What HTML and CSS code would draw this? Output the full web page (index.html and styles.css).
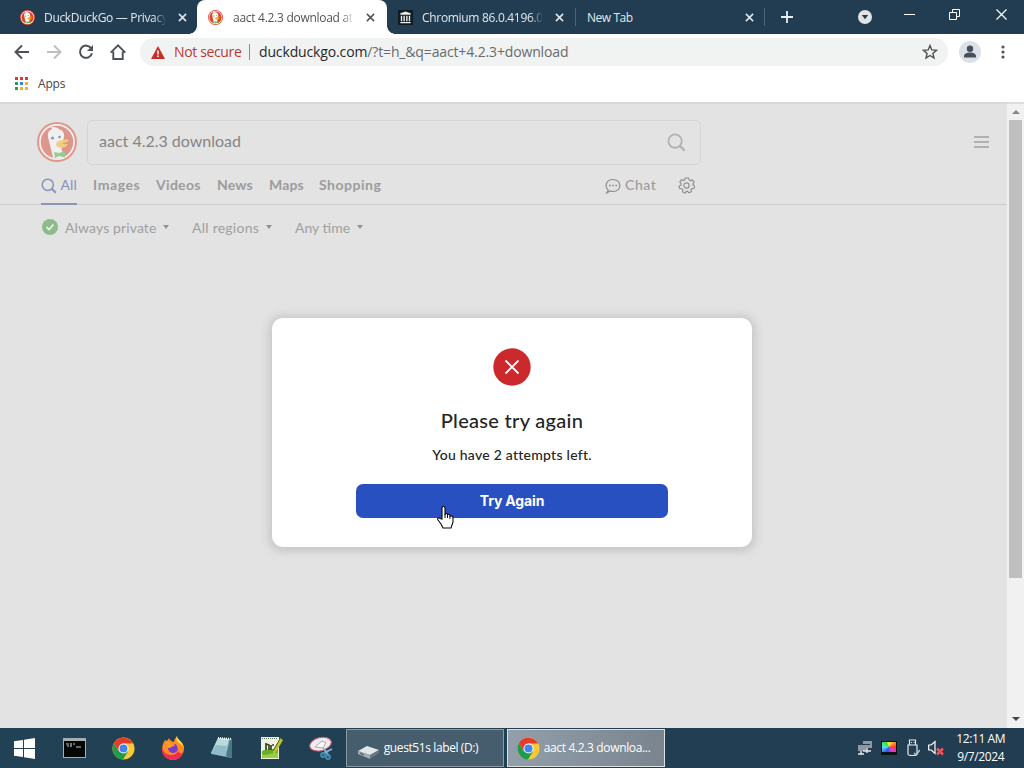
FILE: index.html
```html
<!DOCTYPE html>
<html lang="en">
<head>
<meta charset="utf-8">
<title>aact 4.2.3 download at DuckDuckGo</title>
<link rel="stylesheet" href="styles.css">
</head>
<body>
<svg class="defs" width="0" height="0" aria-hidden="true">
  <defs>
    <symbol id="duck" viewBox="0 0 40 40">
      <circle cx="20" cy="20" r="20" fill="#e2452b"/>
      <circle cx="20" cy="20" r="18" fill="#fff"/>
      <circle cx="20" cy="20" r="16.200" fill="#d9422c"/>
      <path d="M16 35.500 11.500 17c-1.500-6 0-9 4-10l-2-1.500c4-1 7 0 9 2 4 1 5 4 4.500 8l-1.500 6-1 6 3 7.500c-4 1.500-8 1.500-11.500.5z" fill="#fff"/>
      <path d="M20 20c4-2 8-3 12-2-1 2-4 2.500-7 3.500 2 1 4 .5 6 .5-2 4-6 4-9.500 3.300-2.500-.8-3-3.800-1.500-5.300z" fill="#fdb913"/>
      <path d="m17 30 5 1 6-2v6.500l-6-1.500-4 2z" fill="#4caf38"/>
      <circle cx="15.500" cy="16" r="1.600" fill="#334f70"/><circle cx="22.500" cy="15" r="1.300" fill="#334f70"/>
    </symbol>
    <symbol id="chrome" viewBox="0 0 24 24">
      <circle cx="12" cy="12" r="11.500" fill="#fcc934"/>
      <path d="M2 6.300A11.500 11.500 0 0 0 11.500 23.500l5.200-8.500L12 12 7 15z" fill="#1e9c4e"/>
      <path d="M2 6.300 7 15l5-3V6.800h10A11.500 11.500 0 0 0 2 6.300z" fill="#e33b2e"/>
      <circle cx="12" cy="12" r="5.300" fill="#fff"/><circle cx="12" cy="12" r="4.200" fill="#4284f0"/>
    </symbol>
    <symbol id="cross" viewBox="0 0 10 10"><path d="m1 1 8 8M9 1 1 9" fill="none" stroke="currentColor" stroke-width="1.700"/></symbol>
    <symbol id="lens" viewBox="0 0 20 20"><circle cx="8.500" cy="8.500" r="7" fill="none" stroke="currentColor" stroke-width="1.900"/><path d="m13.500 13.500 5 5" stroke="currentColor" stroke-width="2.500"/></symbol>
  </defs>
</svg>
<div class="screen">
  <header class="tabstrip">
    <div class="tab first"><svg class="fav"><use href="#duck"/></svg><span class="title t1">DuckDuckGo — Privacy</span><svg class="x"><use href="#cross"/></svg></div>
    <div class="tab active"><svg class="fav"><use href="#duck"/></svg><span class="title t2">aact 4.2.3 download at</span><svg class="x"><use href="#cross"/></svg></div>
    <div class="tab third"><svg class="fav" viewBox="0 0 16 16"><path fill="#111b22" d="M0 0h16v16H0z"/><path fill="#e8ecee" d="m8 1.500 5.500 2V5h-11V3.500zM3 6h1.500v6H3zM5.800 6h1.500v6H5.800zM8.700 6h1.500v6H8.700zM11.500 6H13v6h-1.500zM2.500 12.700h11v1.500h-11z"/></svg><span class="title t3">Chromium 86.0.4196.0</span><svg class="x"><use href="#cross"/></svg></div>
    <div class="tab fourth"><span class="title t4">New Tab</span><svg class="x"><use href="#cross"/></svg></div>
    <svg class="plus" viewBox="0 0 12 12"><path d="M6 0v12M0 6h12" stroke="#e9eef2" stroke-width="1.800"/></svg>
    <svg class="search-tabs" viewBox="0 0 14 14"><circle cx="7" cy="7" r="7" fill="#dfe4e7"/><path d="M3.800 5h6.400L7 9.300z" fill="#203a4d"/></svg>
    <svg class="wmin" viewBox="0 0 11 11"><path d="M0 5.500h11" stroke="#fff"/></svg>
    <svg class="wmax" viewBox="0 0 11 11"><path d="M.5 3.500h7v7h-7zM3.500 3V.5h7v7H8" fill="none" stroke="#fff"/></svg>
    <svg class="wclose" viewBox="0 0 11 11"><path d="m.5.5 10 10m0-10-10 10" stroke="#fff" stroke-width="1.200"/></svg>
  </header>
  <div class="toolbar">
    <svg class="ic" viewBox="0 0 16 16"><path d="M15 8H2M8 1.500 1.500 8 8 14.500" fill="none" stroke="#4d5155" stroke-width="1.900"/></svg>
    <svg class="ic" viewBox="0 0 16 16"><path d="M1 8h13M8 1.500 14.500 8 8 14.500" fill="none" stroke="#bcbec0" stroke-width="1.900"/></svg>
    <svg class="ic" viewBox="0 0 16 16"><path d="M13.300 4.500A6.100 6.100 0 1 0 14 9.300" fill="none" stroke="#4d5155" stroke-width="2"/><path d="M15 1v6H9z" fill="#4d5155"/></svg>
    <svg class="ic home" viewBox="0 0 16 16"><path d="M.7 8.700 8 1.400l7.300 7.300M3.300 7.500V15h9.400V7.500" fill="none" stroke="#4d5155" stroke-width="1.900"/></svg>
    <div class="omnibox">
      <svg class="warn" viewBox="0 0 14 13"><path d="M7 0 14 13H0z" fill="#c5302a"/><path d="M7 4.500V8.500M7 9.500V11" stroke="#fff" stroke-width="1.500"/></svg>
      <span class="insecure">Not secure</span><i class="bar"></i>
      <span class="url"><b>duckduckgo.com</b>/?t=h_&amp;q=aact+4.2.3+download</span>
      <svg class="star" viewBox="0 0 16 16"><path d="m8 1.500 1.800 4.400 4.700.4-3.600 3.100 1.100 4.600L8 11.500 4 14l1.100-4.600L1.500 6.300l4.700-.4z" fill="none" stroke="#4d5155" stroke-width="1.400"/></svg>
    </div>
    <svg class="avatar" viewBox="0 0 22 22"><circle cx="11" cy="11" r="11" fill="#dbe0e9"/><circle cx="11" cy="7.700" r="3.200" fill="#474f59"/><path d="M5 16.500v-1.500c0-2 3-3.500 6-3.500s6 1.500 6 3.500v1.500z" fill="#474f59"/></svg>
    <svg class="kebab" viewBox="0 0 4 14"><circle cx="2" cy="2" r="1.600"/><circle cx="2" cy="7" r="1.600"/><circle cx="2" cy="12" r="1.600"/></svg>
  </div>
  <div class="bookmarks">
    <svg class="apps" viewBox="0 0 13 13"><path fill="#d93a32" d="M0 0h3v3H0zM5 0h3v3H5zM10 0h3v3h-3z"/><path fill="#2e9b57" d="M0 5h3v3H0zM0 10h3v3H0z"/><path fill="#407fd7" d="M5 5h3v3H5z"/><path fill="#e9b62b" d="M10 5h3v3h-3zM5 10h3v3H5zM10 10h3v3h-3z"/></svg>
    <span class="apps-label">Apps</span>
  </div>
  <div class="viewport">
    <main class="page">
      <div class="searchrow">
        <svg class="logo"><use href="#duck"/></svg>
        <div class="searchbox"><span class="query">aact 4.2.3 download</span><svg class="glass"><use href="#lens"/></svg></div>
        <svg class="burger" viewBox="0 0 15 12"><path d="M0 1h15M0 6h15M0 11h15" stroke="#a0a0a0" stroke-width="1.500"/></svg>
      </div>
      <nav class="nav">
        <a class="all"><svg><use href="#lens"/></svg><span>All</span></a>
        <a class="n1">Images</a><a class="n2">Videos</a><a class="n3">News</a><a class="n4">Maps</a><a class="n5">Shopping</a>
        <svg class="chat" viewBox="0 0 16 16"><path d="M3.200 12.200C-1 8 1.500 1.500 8 1.500c9 0 9.300 12 0 12-1.400 0-2-.2-3-.6L1.700 15z" fill="none" stroke="#8e8e8e" stroke-width="1.200"/><path d="M4 7.500h1.700M7.200 7.500h1.700M10.400 7.500h1.700" stroke="#8e8e8e" stroke-width="1.600"/></svg>
        <a class="n6">Chat</a>
        <svg class="gear" viewBox="0 0 18 18"><path d="m7.500 1-.5 2.100-1.400.7-2-.9-1.700 2.300 1.400 1.600v1.700L1 9.800l1 2.600 2.200.1 1 1.200-.3 2.100 2.600 1.200 1.300-1.800h1.400l1.400 1.600 2.500-1.300-.3-2 1-1.200 2.200-.3.700-2.600-1.900-1.100V7.100l1.300-1.700-1.800-2.200-2 .8L11.800 3l-.6-2z" fill="none" stroke="#8e8e8e" stroke-width="1.200"/><circle cx="9" cy="9" r="2.800" fill="none" stroke="#8e8e8e" stroke-width="1.200"/></svg>
      </nav>
      <div class="filters">
        <svg class="check" viewBox="0 0 16 16"><circle cx="8" cy="8" r="8" fill="#8dbb8c"/><path d="m4.500 8 2.500 2.500 4.500-5" fill="none" stroke="#f1f5f0" stroke-width="1.700"/></svg>
        <span class="f1">Always private</span><i class="caret"></i>
        <span class="f2">All regions</span><i class="caret"></i>
        <span class="f3">Any time</span><i class="caret"></i>
      </div>
      <section class="dialog">
        <svg class="fail" viewBox="0 0 38 38"><circle cx="19" cy="19" r="18.700" fill="#cc292c"/><path d="m12.500 12.500 13 13m0-13-13 13" stroke="#fff" stroke-width="1.800"/></svg>
        <h1>Please try again</h1>
        <p>You have 2 attempts left.</p>
        <button>Try Again</button>
      </section>
    </main>
    <aside class="scrollbar"><i class="up"></i><div class="thumb"></div><i class="down"></i></aside>
  </div>
  <footer class="taskbar">
    <div class="launch"><svg width="21" height="21" viewBox="0 0 21 21"><path fill="#fff" d="M0 3.300 9 2v8H0zM10 1.800 21 0v10H10zM0 11h9v8l-9-1.300zM10 11h11v10l-11-1.700z"/></svg></div>
    <div class="launch"><svg width="23" height="20" viewBox="0 0 23 20"><path fill="#a7adb0" d="M0 0h23v20H0z"/><path fill="#050606" d="M1 3h21v16H1z"/><path d="M3 6h3M4 8h2M8 5v4M10 6h2M13 9h5" stroke="#c8c8c8" stroke-width="1.200"/></svg></div>
    <div class="launch"><svg width="23" height="23"><use href="#chrome"/></svg></div>
    <div class="launch"><svg width="24" height="24" viewBox="0 0 24 24"><path d="M6 5 8 2c1 3 3 3 5 4 0-3 2-4 3-6 0 4 6 5 7 12 0 7-5 12-11 12C2 24-2 13 4 4z" fill="#ff8b22"/><path d="M1 11c1 5 4 8 9 8 4 0 6-2 7-4 2 3 4 3 5 1-1 5-5 8-10 8C5 24 0 19 1 11z" fill="#f22d55"/><path d="M16 0c0 4 6 5 7 12-2-3-3-4-5-5-3-2-3-4-2-7z" fill="#ffe044"/><path d="M7 9c3-1 4 1 7-1 3 2 4 6 1 8-4 3-8-1-8-4l4-1z" fill="#763bc8"/><path d="M5 6c3-1 4 0 5 2l4 1c-1 2-4 1-5 3l-4-2z" fill="#ff9827"/></svg></div>
    <div class="launch"><svg width="24" height="22" viewBox="0 0 24 22"><path d="m8 1 14 1v19L1 17z" fill="#82aeb7"/><path d="m8 1 11 1-4 17-14-3z" fill="#b9dbe0"/><path d="m6 8 11 1-2 10-14-3z" fill="#91bbc6"/><path d="m20 2 2 0v19l-6-2z" fill="#477884"/><path d="m8 1 14 1" stroke="#eff" stroke-width="2" stroke-dasharray="1 1"/></svg></div>
    <div class="launch"><svg width="22" height="24" viewBox="0 0 22 24"><path d="M0 1h18v22H0z" fill="#eef2e4"/><path d="M1 15c5-3 10 0 16-4v11H1z" fill="#69ad28"/><path d="M1 18c5 3 10-2 16-1v5H1z" fill="#98cd45"/><path d="M1 2.500h15" stroke="#68735d" stroke-dasharray="1 1"/><path d="M5 14V8l3 1v5M10 9v5M11 9h2" fill="none" stroke="#38431f" stroke-width="1.700"/><path d="m12 15 7-13 3 2-7 12-3 2z" fill="#b7c62d"/><path d="m12 15 7-12" stroke="#576018"/></svg></div>
    <div class="launch"><svg width="24" height="24" viewBox="0 0 24 24"><ellipse cx="11.500" cy="8" rx="11" ry="6.500" fill="#f1ebef" stroke="#c55d6c" transform="rotate(-15 12 8)"/><path d="m6 11 7-6 4 2-3 5z" fill="#f8fafc" stroke="#a5a9b7"/><path d="m14 12 7 9M23 13l-10 5" stroke="#82bbd5" stroke-width="1.800"/><circle cx="14" cy="19" r="2" fill="none" stroke="#3f8eb0" stroke-width="1.800"/><circle cx="19" cy="21" r="2" fill="none" stroke="#3f8eb0" stroke-width="1.800"/></svg></div>
    <div class="task drive"><svg width="21" height="14" viewBox="0 0 21 14"><path d="m0 6 9-5 12 4-9 5z" fill="#e2e7e8"/><path d="m0 6 12 4v4L0 9z" fill="#a3adb1"/><path d="m12 10 9-5v3l-9 6z" fill="#697981"/><path d="m2 8 4 2" stroke="#39474e"/></svg><span class="d">guest51s label (D:)</span></div>
    <div class="task current"><svg width="23" height="23"><use href="#chrome"/></svg><span class="c">aact 4.2.3 downloa...</span></div>
    <div class="tray">
      <svg width="16" height="16" viewBox="0 0 16 16"><path fill="#8e989e" d="M6 1h9v7H6zM1 5h8v6H1z"/><path d="M6 11h8M10 8v5M1 14h6M4 11v4" stroke="#dfe4e5" stroke-width="1.500"/><path fill="#203c50" d="M6 4h7v1H6z"/></svg>
      <div class="colors"><i></i></div>
      <svg class="usb" width="14" height="18" viewBox="0 0 14 18"><path d="M3.500 6V1h6v5M2 6h9v9c0 2-9 2-9 0zM5 3.500h1M7.500 3.500h1" fill="none" stroke="#e7ebed" stroke-width="1.200"/><path d="m8 14 2 2 4-5" fill="none" stroke="#c5ced3" stroke-width="1.300"/></svg>
      <svg class="mute" width="16" height="16" viewBox="0 0 16 16"><path d="M.7 5h2.500L7 1.500v12L3.200 10H.7z" fill="none" stroke="#fff" stroke-width="1.200"/><path d="m9 8.500 6 6m0-6-6 6" stroke="#ef5059" stroke-width="2.500"/></svg>
    </div>
    <div class="clock"><span class="time">12:11 AM</span><span class="date">9/7/2024</span></div>
  </footer>
  <svg class="cursor" viewBox="0 0 17 23"><path d="M5 13V2c0-2 3-2 3 0v6c1-1 2-.5 2.500.5C12 8 13 8.500 13 10c2-.5 3 .5 3 2v4l-2 6H6l-2-4-3-4c-1-2 1-3 2-1.500z" fill="#fff" stroke="#080808" stroke-width="1.100"/><path d="M8 8v4M10.500 9v3M13 10v3" stroke="#080808"/></svg>
</div>
</body>
</html>
```
FILE: styles.css
```css
* { box-sizing: border-box; }
body { margin: 0; overflow: hidden; }
svg { flex: none; display: block; }
.defs { position: absolute; }
.screen { position: relative; width: 1024px; height: 768px; display: flex; flex-direction: column; overflow: hidden; font-family: "Open Sans", "Noto Sans", sans-serif; font-size: 12px; background: #fff; }
span, a { white-space: nowrap; }

.tabstrip { height: 34px; flex: none; display: flex; align-items: flex-start; background: #223d51; }
.tab { height: 34px; display: flex; align-items: center; color: #e1e8ed; flex: none; }
.first { width: 197px; padding-left: 20px; }
.active { width: 190px; padding-left: 11px; color: #515559; background: #fff; border-radius: 8px 8px 0 0; position: relative; }
.active::before, .active::after { content: ""; position: absolute; bottom: 0; width: 8px; height: 8px; }
.active::before { left: -8px; background: radial-gradient(circle at 0 0, #223d51 7.500px, #fff 8px); }
.active::after { right: -8px; background: radial-gradient(circle at 100% 0, #223d51 7.500px, #fff 8px); }
.third { width: 188px; padding-left: 11px; }
.fourth { width: 190px; padding-left: 11px; border-left: 1px solid #4e6575; border-right: 1px solid #4e6575; height: 18px; margin-top: 8px; }
.fav { width: 15px; height: 15px; margin-right: 9px; }
.title { margin-right: 12px; }
.t1, .t2, .t3 { -webkit-mask-image: linear-gradient(90deg, #000 90%, transparent); mask-image: linear-gradient(90deg, #000 90%, transparent); }
.t1 { width: 122px; letter-spacing: -.32px; }
.t2 { width: 122px; letter-spacing: -.28px; padding-left: 1px; }
.t3 { width: 121px; letter-spacing: -.31px; }
.third .fav { margin-right: 9px; }
.t4 { width: 146px; letter-spacing: -.45px; }
.x { width: 9px; height: 9px; }
.plus { width: 12px; height: 12px; margin: 11px 0 0 16px; }
.search-tabs { width: 14px; height: 14px; margin: 10px 0 0 65px; }
.wmin { width: 11px; height: 11px; margin: 9px 0 0 32px; }
.wmax { width: 11px; height: 11px; margin: 9px 0 0 34px; }
.wclose { width: 11px; height: 11px; margin: 9px 0 0 36px; }

.toolbar { height: 36px; flex: none; display: flex; align-items: center; padding-left: 14px; }
.ic { width: 16px; height: 16px; margin-right: 16px; }
.home { margin-right: 15px; }
.omnibox { width: 808px; height: 28px; display: flex; align-items: center; margin-left: -1px; border-radius: 14px; background: #f1f2f2; padding-left: 11px; font-size: 14px; color: #676b6e; }
.warn { width: 14px; height: 13px; margin-right: 9px; }
.insecure { width: 67px; color: #b83a32; letter-spacing: -.36px; padding-bottom: 1px; }
.bar { height: 16px; width: 1px; background: #8c8c8c; margin: 0 9px 0 8px; }
.url { width: 663px; letter-spacing: -.14px; padding-bottom: 1px; }
.url b { color: #25282b; font-weight: 400; }
.star { width: 16px; height: 16px; }
.avatar { width: 22px; height: 22px; margin-left: 11px; }
.kebab { width: 4px; height: 14px; margin-left: 20px; fill: #505458; }
.bookmarks { height: 32px; flex: none; display: flex; align-items: center; padding: 0 0 5px 15px; color: #45484b; }
.apps { width: 13px; height: 13px; margin-right: 10px; }
.apps-label { letter-spacing: -.2px; }

.viewport { flex: 1; display: flex; min-height: 0; }
.page { width: 1007px; position: relative; background: #e3e3e3; border-top: 2px solid #d8d8d8; font-family: Lato, "Open Sans", sans-serif; display: flex; flex-direction: column; }
.searchrow { padding: 15px 0 0 37px; height: 61px; display: flex; align-items: center; flex: none; }
.logo { width: 40px; height: 40px; opacity: .48; margin-top: -1px; }
.searchbox { width: 614px; height: 45px; border: 1px solid #d5d5d5; border-radius: 5px; margin-left: 10px; display: flex; align-items: center; padding: 0 14px 3px 11px; justify-content: space-between; font-size: 16px; color: #858585; }
.glass { width: 19px; height: 19px; color: #b2b2b2; margin-top: 3px; }
.burger { width: 15px; height: 12px; margin: -1px 0 0 273px; }
.nav { height: 40px; flex: none; display: flex; align-items: flex-start; border-bottom: 1px solid #cdcdcd; padding-left: 41px; font-weight: 700; font-size: 14px; color: #9c9c9c; line-height: 40px; letter-spacing: .15px; }
.all { width: 36px; height: 40px; display: flex; align-items: center; justify-content: space-between; color: #8793b9; border-bottom: 2px solid #8995b7; font-weight: 400; margin-right: 16px; }
.all svg { width: 16px; height: 16px; margin-top: 3px; }
.all span { padding-top: 2px; }
.n1 { width: 63px; letter-spacing: .6px; } .n2 { width: 61px; letter-spacing: .3px; } .n3 { width: 52px; } .n4 { width: 50px; } .n5 { width: 286px; letter-spacing: .5px; } .n6 { width: 53px; font-weight: 500; letter-spacing: .6px; }
.chat { width: 16px; height: 16px; margin: 13px 4px 0 0; }
.gear { width: 17px; height: 17px; margin-top: 12px; }
.filters { height: 44px; flex: none; display: flex; align-items: center; padding-left: 42px; font-size: 14px; color: #a0a0a0; }
.check { width: 16px; height: 16px; margin-right: 7px; }
.f1 { width: 98px; letter-spacing: .12px; } .f2 { width: 74px; letter-spacing: .25px; } .f3 { width: 62px; }
.caret { border: 3.500px solid transparent; border-top: 4px solid #929292; border-bottom: 0; margin-right: 23px; }
.dialog { width: 480px; height: 229px; position: absolute; left: 272px; top: 214px; background: #fff; border-radius: 11px; box-shadow: 0 1px 9px 4px #c8c8c8; display: flex; flex-direction: column; align-items: center; padding-top: 30px; color: #242424; }
.fail { width: 38px; height: 38px; }
.dialog h1 { margin: 20px 0 0; font-size: 20px; line-height: 28px; font-weight: 500; letter-spacing: .3px; }
.dialog p { margin: 11px 0 0; font-size: 14px; line-height: 20px; font-weight: 500; letter-spacing: .25px; }
.dialog button { width: 312px; height: 34px; margin-top: 19px; padding: 0; border: 0; border-radius: 7px; background: #2850c0; color: #fff; font: 700 14px/34px Inter, sans-serif; letter-spacing: -.15px; }
.scrollbar { width: 17px; background: #f1f1f1; border-top: 2px solid #ddd; display: flex; flex-direction: column; align-items: center; }
.up { border: 4px solid transparent; border-bottom: 4px solid #858585; border-top: 0; margin: 6px 0; }
.thumb { width: 13px; height: 458px; background: #bfbfbf; }
.down { border: 4px solid transparent; border-top: 4px solid #454545; border-bottom: 0; margin-top: 139px; }

.taskbar { height: 40px; flex: none; display: flex; background: linear-gradient(90deg, #214154, #223d52); color: #fff; }
.launch { width: 49.400px; display: flex; align-items: center; justify-content: center; }
.task { height: 38px; margin-top: 1px; border: 1px solid #8d9aa5; background: #465d6e; display: flex; align-items: center; width: 158px; letter-spacing: -.4px; }
.drive { padding-left: 11px; }
.drive svg { margin: 7px 5px 0 0; }
.current { margin-left: 3px; border-color: #dce1e3; background: linear-gradient(90deg, #929fab, #79848e); padding-left: 9px; }
.current svg { margin-right: 4px; }
.task span { padding-bottom: 1px; }
.c { letter-spacing: -.35px; }
.tray { display: flex; align-items: center; margin-left: 192px; gap: 8px; }
.colors { width: 16px; height: 14px; border: 1px solid #0c1215; background: #0c1215; padding-bottom: 2px; }
.colors i { display: block; height: 10px; background: conic-gradient(#ffef3c, #ff9b31 45deg, #ff3b31 90deg, #d13cf0 145deg, #344df2 210deg, #55e4f0 270deg, #34dd4a 320deg, #ffef3c); }
.usb { margin-left: 1px; }
.clock { display: flex; flex-direction: column; align-items: center; width: 60px; margin-left: 7px; line-height: 18px; padding-top: 2px; letter-spacing: -.4px; }
.cursor { position: absolute; left: 437px; top: 506px; width: 17px; height: 23px; }
```
